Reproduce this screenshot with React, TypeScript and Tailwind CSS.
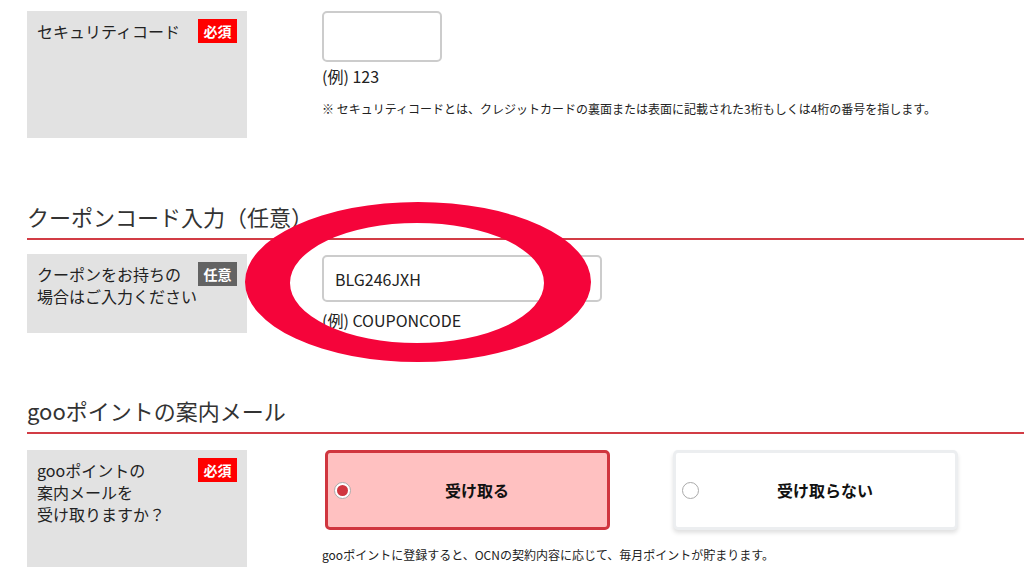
import React from 'react';

const FONT = "font-['Noto_Sans_CJK_JP','Noto_Sans',sans-serif]";

// バッジ（必須・任意）
const Badge: React.FC<{ label: string; tone: 'required' | 'optional' }> = ({ label, tone }) => (
  <span
    className={`mt-[8px] flex h-[24px] w-[39px] shrink-0 items-center justify-center text-[14px] font-bold leading-none text-white ${
      tone === 'required' ? 'bg-[#ff0000]' : 'bg-[#636363]'
    }`}
  >
    {label}
  </span>
);

// 左側のグレー見出しボックス
const LabelBox: React.FC<{ lines: string[]; badge: React.ReactNode; height: string }> = ({ lines, badge, height }) => (
  <div className={`flex w-[220px] shrink-0 justify-between bg-[#e2e2e2] pl-[10px] pr-[10px] ${height}`}>
    <div className="pt-[9px] text-[16px] leading-[22px] text-[#222]">
      {lines.map((l) => (
        <div key={l}>{l}</div>
      ))}
    </div>
    {badge}
  </div>
);

const SectionTitle: React.FC<{ title: string; className: string }> = ({ title, className }) => (
  <h2 className={`border-b-2 border-[#d23c45] pb-[6px] text-[22px] leading-[32px] text-[#333] ${className}`}>
    {title}
  </h2>
);

const RadioCard: React.FC<{ label: string; checked: boolean }> = ({ label, checked }) => (
  <div
    className={`relative flex h-[80px] w-[285px] items-center rounded-[5px] border-[3px] ${
      checked
        ? 'border-[#d0363f] bg-[#ffc1c1]'
        : 'border-[#eceef0] bg-white shadow-[0_3px_4px_rgba(0,0,0,0.12)]'
    }`}
  >
    <span className="ml-[6px] flex h-[17px] w-[17px] items-center justify-center rounded-full border border-[#aaa] bg-white">
      {checked && <span className="h-[11px] w-[11px] rounded-full bg-[#d0363f]" />}
    </span>
    <span className="flex-1 pr-[4px] text-center text-[16px] font-bold text-[#111]">{label}</span>
  </div>
);

export default function App() {
  return (
    <div className={`relative h-[567px] w-[1024px] overflow-hidden bg-white pl-[27px] ${FONT}`}>
      {/* セキュリティコード */}
      <div className="mt-[11px] flex">
        <LabelBox lines={['セキュリティコード']} badge={<Badge label="必須" tone="required" />} height="h-[127px]" />
        <div className="ml-[75px]">
          <div className="h-[51px] w-[120px] rounded-[5px] border-2 border-[#cccccc] bg-white" />
          <p className="mt-[2px] text-[16px] leading-[24px] text-[#222]">(例) 123</p>
          <p className="mt-[12px] text-[12px] leading-[18px] text-[#222]">
            ※ セキュリティコードとは、クレジットカードの裏面または表面に記載された3桁もしくは4桁の番号を指します。
          </p>
        </div>
      </div>

      {/* クーポンコード */}
      <SectionTitle title="クーポンコード入力（任意）" className="mt-[62px]" />
      <div className="mt-[14px] flex">
        <LabelBox
          lines={['クーポンをお持ちの', '場合はご入力ください']}
          badge={<Badge label="任意" tone="optional" />}
          height="h-[79px]"
        />
        <div className="ml-[75px] pt-[1px]">
          <div className="flex h-[47px] w-[280px] items-center rounded-[5px] border-2 border-[#cccccc] bg-white pl-[11px] text-[16px] text-[#222]">
            BLG246JXH
          </div>
          <p className="mt-[6px] text-[16px] leading-[24px] text-[#222]">(例) COUPONCODE</p>
        </div>
      </div>

      {/* gooポイント */}
      <SectionTitle title="gooポイントの案内メール" className="mt-[61px]" />
      <div className="mt-[16px] flex">
        <LabelBox
          lines={['gooポイントの', '案内メールを', '受け取りますか？']}
          badge={<Badge label="必須" tone="required" />}
          height="h-[140px]"
        />
        <div className="ml-[75px]">
          <div className="ml-[3px] flex gap-[63px]">
            <RadioCard label="受け取る" checked />
            <RadioCard label="受け取らない" checked={false} />
          </div>
          <p className="mt-[16px] text-[12px] leading-[18px] text-[#222]">
            gooポイントに登録すると、OCNの契約内容に応じて、毎月ポイントが貯まります。
          </p>
          <p className="text-[12px] leading-[18px] text-[#222]">（例）「OCN モバイル ONE」10ポイント/月）</p>
        </div>
      </div>

      {/* 赤い丸囲み */}
      <svg className="pointer-events-none absolute left-0 top-0" width="1024" height="567">
        <path
          fillRule="evenodd"
          fill="#f5043a"
          d="M245 282 a173 80 0 1 0 346 0 a173 80 0 1 0 -346 0 Z M290 283 a127 60 0 1 0 254 0 a127 60 0 1 0 -254 0 Z"
        />
      </svg>
    </div>
  );
}
